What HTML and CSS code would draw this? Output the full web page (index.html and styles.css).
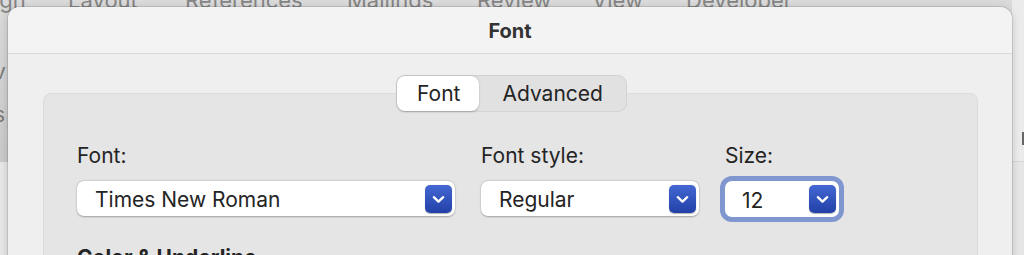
FILE: index.html
```html
<!DOCTYPE html>
<html lang="en">
<head>
  <meta charset="UTF-8" />
  <meta name="viewport" content="width=device-width, initial-scale=1.0" />
  <title>Font</title>
  <link rel="stylesheet" href="styles.css">
</head>
<body>
  <!-- word window behind the sheet -->
  <div class="backdrop">
    <div class="ribbon">
      <div class="ribbon-main">
        <div class="ribbon-tabs">
          <span class="rt rt-1">ign</span>
          <span class="rt rt-2">Layout</span>
          <span class="rt rt-3">References</span>
          <span class="rt rt-4">Mailings</span>
          <span class="rt rt-5">Review</span>
          <span class="rt rt-6">View</span>
          <span class="rt">Developer</span>
        </div>
        <div class="ribbon-side">
          <span>v</span>
          <span>s</span>
        </div>
      </div>
      <div class="ribbon-edge"><span class="tick"></span></div>
    </div>
    <div class="doc"></div>
  </div>

  <div class="sheet">
    <div class="titlebar">Font</div>
    <div class="sheet-body">
      <div class="tabs">
        <button type="button" class="tab active">Font</button>
        <button type="button" class="tab">Advanced</button>
      </div>
      <div class="group">
        <div class="fields">
          <div class="field field-font">
            <label>Font:</label>
            <div class="popup">
              <span>Times New Roman</span>
              <span class="arrow"><svg width="27" height="28" viewBox="0 0 27 28"><path d="M8.8 12.2 L13.5 16.6 L18.2 12.2" fill="none" stroke="#fff" stroke-width="2.3" stroke-linecap="round" stroke-linejoin="round"/></svg></span>
            </div>
          </div>
          <div class="field field-style">
            <label>Font style:</label>
            <div class="popup">
              <span>Regular</span>
              <span class="arrow"><svg width="27" height="28" viewBox="0 0 27 28"><path d="M8.8 12.2 L13.5 16.6 L18.2 12.2" fill="none" stroke="#fff" stroke-width="2.3" stroke-linecap="round" stroke-linejoin="round"/></svg></span>
            </div>
          </div>
          <div class="field field-size">
            <label>Size:</label>
            <div class="popup focused">
              <span>12</span>
              <span class="arrow"><svg width="27" height="28" viewBox="0 0 27 28"><path d="M8.8 12.2 L13.5 16.6 L18.2 12.2" fill="none" stroke="#fff" stroke-width="2.3" stroke-linecap="round" stroke-linejoin="round"/></svg></span>
            </div>
          </div>
        </div>
        <h3 class="section">Color &amp; Underline</h3>
      </div>
    </div>
  </div>
</body>
</html>
```

FILE: styles.css
```css
body {
  margin: 0; width: 1024px; height: 255px; overflow: hidden;
  position: relative; background: #ececec;
  font-family: Inter, "Noto Sans", sans-serif; color: #242424;
}

/* backdrop */
.ribbon { display: flex; height: 162px; }
.ribbon-main { flex: 1; background: linear-gradient(#dadada, #c9c9c9); overflow: hidden; }
.ribbon-tabs { display: flex; margin: -10px 0 0 -6px; font-size: 22px; line-height: 21px; color: #858585; white-space: nowrap; }
.rt-1 { width: 74px; }
.rt-2 { width: 117px; }
.rt-3 { width: 162px; }
.rt-4 { width: 130px; }
.rt-5 { width: 115px; }
.rt-6 { width: 94px; }
.ribbon-side { display: flex; flex-direction: column; gap: 22px; margin: 50px 0 0 -6px; font-size: 21px; line-height: 21px; color: #7a7a7a; }
.ribbon-edge { width: 12px; background: #ebebeb; border-bottom: 1px solid #d8d8d8; display: flex; justify-content: flex-end; align-items: flex-end; padding-bottom: 16px; box-sizing: border-box; }
.tick { width: 2px; height: 13px; background: #666; }
.doc { height: 93px; background: #e6e6e6; }

/* sheet */
.sheet {
  position: absolute; left: 8px; top: 7px; width: 1004px; height: 270px;
  background: #efefef; border-radius: 12px 12px 0 0;
  box-shadow: 0 0 0 1px rgba(0,0,0,0.1), 0 2px 8px rgba(0,0,0,0.18);
}
.titlebar {
  height: 47px; box-sizing: border-box; border-bottom: 1px solid #d9d9d9;
  background: #f3f3f3; border-radius: 12px 12px 0 0;
  display: flex; align-items: center; justify-content: center;
  font-weight: 700; font-size: 20px; color: #333; padding-top: 1px;
}
.sheet-body { padding: 21px 34px 0 35px; }

.tabs {
  position: relative; z-index: 1;
  display: flex; width: max-content; margin: 0 auto 0 353px;
  background: #e1e1e1; border: 1px solid #d3d3d3; border-radius: 9px;
  height: 37px; box-sizing: border-box;
}
.tab {
  font: inherit; font-size: 21px; color: #242424; background: none; border: none;
  padding: 0 21px 0 22px; border-radius: 8px; height: 35px; margin: 0;
}
.tab.active { background: #fff; box-shadow: 0 0.5px 2px rgba(0,0,0,0.25); padding: 0 19px 0 20px; }
.tab + .tab { padding: 0 23px 0 23px; }

.group {
  margin-top: -19px; height: 200px; box-sizing: border-box;
  background: #e5e5e5; border: 1px solid #dbdbdb; border-radius: 8px;
  padding: 49px 33px 0 33px;
}
.fields { display: flex; gap: 26px; }
.field label { display: block; font-size: 21px; line-height: 26px; margin-bottom: 12px; }
.field-font { width: 378px; }
.field-style { width: 218px; }
.field-size { width: 114px; }

.popup {
  display: flex; align-items: center; height: 35px; box-sizing: border-box;
  padding: 0 3px 0 18px; background: #fff; border-radius: 7px;
  box-shadow: 0 0.5px 2px rgba(0,0,0,0.28), 0 0 0 0.5px rgba(0,0,0,0.06);
  font-size: 21px;
}
.popup > span:first-child { padding-top: 2px; }
.popup.focused { box-shadow: 0 0 0 5px #7f96cf; padding-left: 17px; height: 36px; }
.arrow {
  margin-left: auto; width: 27px; height: 28px; border-radius: 5px;
  background: linear-gradient(#4467d2, #2241a8);
  box-shadow: 0 0.5px 1px rgba(0,0,0,0.3);
}
.arrow svg { display: block; }

.section { margin: 28px 0 0; font-size: 21px; line-height: 26px; font-weight: 700; }
```
